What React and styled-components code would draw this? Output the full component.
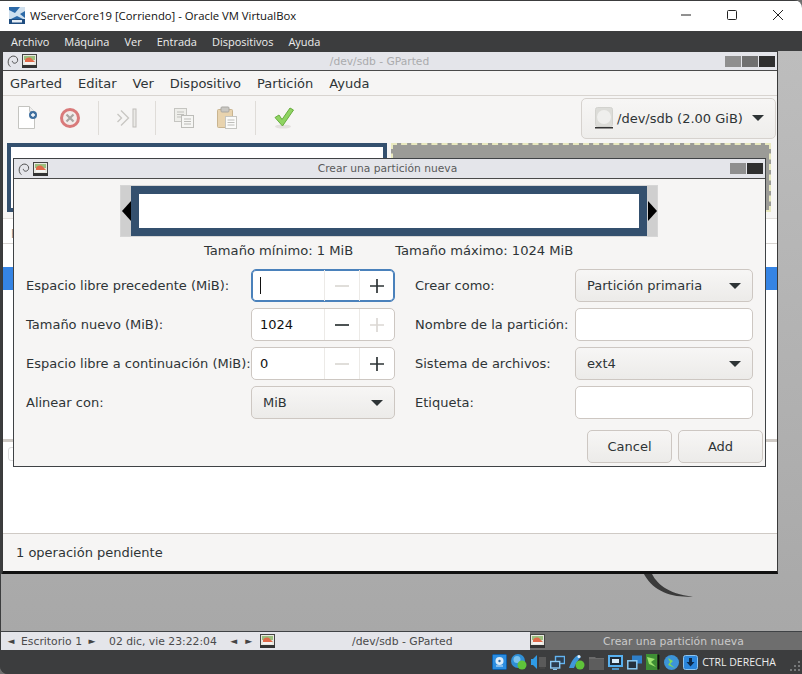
import React from "react"
import styled, { createGlobalStyle } from "styled-components"

const GlobalStyle = createGlobalStyle`
  html, body { margin: 0; padding: 0; background: #6f6f6f; overflow: hidden; }
  * { box-sizing: border-box; }
`

const UI_FONT = `"DejaVu Sans", "Liberation Sans", sans-serif`
const HOST_FONT = `"Open Sans", "Noto Sans", sans-serif`

const Swirl = ({ size = 14 }) => (
  <svg width={size} height={size} viewBox="0 0 16 16" fill="none">
    <path d="M5 14.5C2.6 12.6 2 9.6 2.8 7c.9-3 3.6-4.9 6.3-4.6 2.6.3 4.5 2.5 4.2 4.9-.2 1.9-1.8 3.3-3.6 3.2-1.5-.1-2.6-1.3-2.4-2.6" stroke="#3c3c3c" strokeWidth="1" />
  </svg>
)

const AppThumb = () => (
  <svg width="15" height="14" viewBox="0 0 15 14">
    <rect x="0.5" y="0.5" width="14" height="12" fill="#e8e8e0" stroke="#444" />
    <rect x="2" y="2" width="11" height="4" fill="#9bbf7e" />
    <path d="M3 6c2-3 5-3 7-1l3 3H3z" fill="#e06a4a" />
    <rect x="3" y="8" width="9" height="2" fill="#f4f4f4" />
    <rect x="0" y="11" width="15" height="3" fill="#333" />
  </svg>
)

const NewDocIcon = () => (
  <svg width="22" height="26" viewBox="0 0 22 26">
    <path d="M1.5 1.5h11l5 5v17h-16z" fill="#fff" stroke="#c4c4c0" />
    <path d="M12.5 1.5v5h5" fill="#eee" stroke="#c4c4c0" />
    <circle cx="16" cy="10" r="4" fill="#3f6f9f" />
    <path d="M14 10h4M16 8v4" stroke="#fff" strokeWidth="1.3" />
  </svg>
)

const DeleteIcon = () => (
  <svg width="22" height="22" viewBox="0 0 22 22">
    <circle cx="11" cy="11" r="8.5" fill="#f2ecea" stroke="#d97a7a" strokeWidth="3" />
    <path d="M7.5 7.5l7 7M14.5 7.5l-7 7" stroke="#a9a5a2" strokeWidth="2.2" />
  </svg>
)

const ApplyAllIcon = () => (
  <svg width="22" height="22" viewBox="0 0 22 22" fill="none">
    <path d="M1.5 7l4 4-4 4M5 3.5l7.5 7.5L5 18.5" stroke="#c9c7c3" strokeWidth="1.4" />
    <rect x="17" y="2" width="3" height="18" fill="#ebeae7" stroke="#c0beba" />
  </svg>
)

const CopyIcon = () => (
  <svg width="22" height="22" viewBox="0 0 22 22">
    <rect x="1.5" y="1.5" width="12" height="13" fill="#eeeeea" stroke="#c5c5c1" />
    <path d="M4 5h7M4 7.5h7M4 10h5" stroke="#c0c0bc" />
    <rect x="8.5" y="8.5" width="12" height="12" fill="#f6f6f4" stroke="#bdbdb9" />
    <path d="M11 12h7M11 14.5h7M11 17h7" stroke="#bcbcb8" />
  </svg>
)

const PasteIcon = () => (
  <svg width="22" height="24" viewBox="0 0 22 24">
    <rect x="1.5" y="3.5" width="15" height="18" rx="1" fill="#e8d3ae" stroke="#c9b48f" />
    <rect x="5" y="1" width="8" height="5" rx="1" fill="#c9c7c2" stroke="#a9a7a2" />
    <rect x="9.5" y="10.5" width="11" height="12" fill="#fbfbfa" stroke="#c5c5c1" />
    <path d="M11.5 14h7M11.5 16.5h7M11.5 19h7" stroke="#bdbdb9" />
  </svg>
)

const CheckIcon = () => (
  <svg width="22" height="24" viewBox="0 0 22 24">
    <ellipse cx="10" cy="20.5" rx="8" ry="2" fill="#e3e1de" />
    <path d="M2 11.5l4-2.5 3 4.5L17 2l3.5 2L9.5 20z" fill="#8fd462" stroke="#69ad3f" strokeLinejoin="round" />
  </svg>
)

const DiskIcon = () => (
  <svg width="18" height="22" viewBox="0 0 18 22">
    <rect x="0.5" y="0.5" width="17" height="19" rx="2" fill="#dcdcd8" stroke="#d2d2ce" />
    <circle cx="9" cy="10" r="7" fill="#efefed" />
    <rect x="0" y="20" width="18" height="1.5" fill="#333" />
  </svg>
)

const VBoxIcon = () => (
  <svg width="16" height="17" viewBox="0 0 16 17">
    <rect width="16" height="17" fill="#2c6aa8" />
    <path d="M0 3l6 3 5-6h5v4l-5 3 5 4v2L8 9l-8 4z" fill="#cfe0ee" />
    <rect y="12" width="16" height="5" fill="#1f4d80" />
    <rect x="3" y="13" width="10" height="2.5" fill="#e7eef5" />
  </svg>
)

const PlusGlyph = ({ $off }) => (
  <svg width="14" height="14" viewBox="0 0 14 14">
    <path d="M0 7h14M7 0v14" stroke={$off ? "#dbd8d4" : "#2e3436"} strokeWidth="1.7" />
  </svg>
)

const MinusGlyph = ({ $off }) => (
  <svg width="14" height="14" viewBox="0 0 14 14">
    <path d="M0 7h14" stroke={$off ? "#dbd8d4" : "#2e3436"} strokeWidth="1.7" />
  </svg>
)

const TrayDisk = () => (
  <svg width="15" height="16" viewBox="0 0 15 16"><rect x="0.5" y="0.5" width="14" height="15" rx="1" fill="#2b8de0" stroke="#0f5fa8" /><circle cx="7.5" cy="7" r="4" fill="#dcecf8" /><circle cx="7.5" cy="7" r="1.2" fill="#2b6ca8" /><path d="M4 12h7" stroke="#dcecf8" /></svg>
)
const TrayGlobe = ({ $dot = "#5fc33a" }) => (
  <svg width="16" height="16" viewBox="0 0 16 16"><circle cx="7" cy="7" r="7" fill="#2f8fd6" /><circle cx="6" cy="5.5" r="3.5" fill="#7cc3ee" /><circle cx="11" cy="11" r="4.5" fill={$dot} /></svg>
)
const TrayAudio = () => (
  <svg width="15" height="16" viewBox="0 0 15 16"><path d="M0 5h2l4-4v14l-4-4H0z" fill="#2f9be6" /><rect x="8" y="3" width="7" height="10" fill="#5a5a5a" /><rect x="9" y="13" width="5" height="2" fill="#444" /></svg>
)
const TrayNetwork = () => (
  <svg width="15" height="15" viewBox="0 0 15 15"><rect x="5.5" y="1.5" width="9" height="7" fill="#2c3e50" stroke="#63b4f0" strokeWidth="1.4" /><rect x="0.7" y="6.5" width="9" height="6.5" fill="#2c3e50" stroke="#8ccbf5" strokeWidth="1.4" /><path d="M3 14.5h4" stroke="#8ccbf5" /></svg>
)
const TrayUsb = () => (
  <svg width="16" height="16" viewBox="0 0 16 16"><path d="M0 14C2 8 5 3 9 1l3 2c-3 3-5 6-7 11z" fill="#3f97da" /><circle cx="11" cy="11" r="4.5" fill="#5fc33a" /><circle cx="10" cy="2.5" r="1.5" fill="#e8f2f9" /></svg>
)
const TrayFolder = () => (
  <svg width="15" height="15" viewBox="0 0 15 15"><path d="M0 2h6l1 1h8v12H0z" fill="#6b6b6b" /><rect y="4" width="15" height="11" fill="#5d5d5d" /></svg>
)
const TrayScreen = () => (
  <svg width="15" height="15" viewBox="0 0 15 15"><rect x="1" y="1" width="13" height="10" fill="#1f2a36" stroke="#57b0ef" strokeWidth="2" /><rect x="4" y="4" width="7" height="4" fill="#d8ecf9" /><path d="M4 14h7" stroke="#57b0ef" strokeWidth="1.5" /></svg>
)
const TrayDisplay = () => (
  <svg width="15" height="15" viewBox="0 0 15 15"><rect x="5" y="0.5" width="10" height="8" fill="#2f7fc9" /><rect x="0.8" y="5.8" width="9" height="8" fill="#24313e" stroke="#8ccbf5" strokeWidth="1.5" /></svg>
)
const TrayCpu = () => (
  <svg width="14" height="16" viewBox="0 0 14 16"><rect width="11" height="16" fill="#3e8f34" /><path d="M1 3l8 2-4 3 5 5-7-3z" fill="#9de46e" /><rect x="11" width="3" height="16" fill="#111" stroke="#4f9a3e" strokeWidth="0.6" /></svg>
)
const TrayNet2 = () => (
  <svg width="15" height="15" viewBox="0 0 15 15"><circle cx="7.5" cy="7.5" r="7.5" fill="#3d94d8" /><path d="M4 3l5 3-3 3 5 4-7-3 2-3z" fill="#7ed957" /></svg>
)
const TrayArrow = () => (
  <svg width="15" height="15" viewBox="0 0 15 15"><rect x="0.5" y="0.5" width="14" height="14" rx="2" fill="#2b86dc" stroke="#8cc4ef" /><path d="M6 3h3v4h2.5l-4 4.5-4-4.5H6z" fill="#0d2a4a" /></svg>
)

const Spin = ({ value, focused, minusOff, plusOff }) => (
  <SpinBox $focused={focused}>
    <SpinValue>{focused ? <Caret /> : value}</SpinValue>
    <SpinStep><MinusGlyph $off={minusOff} /></SpinStep>
    <SpinStep><PlusGlyph $off={plusOff} /></SpinStep>
  </SpinBox>
)

const Combo = ({ children }) => (
  <ComboBox>
    <span>{children}</span>
    <ArrowDown />
  </ComboBox>
)

const App = () => (
  <>
    <GlobalStyle />
    <Host>
      <HostTitle>
        <VBoxIcon />
        <HostTitleText>WServerCore19 [Corriendo] - Oracle VM VirtualBox</HostTitleText>
        <HostControls>
          <svg width="12" height="12" viewBox="0 0 12 12"><path d="M1 6h10" stroke="#222" strokeWidth="1" /></svg>
          <svg width="12" height="12" viewBox="0 0 12 12"><rect x="1.5" y="1.5" width="9" height="9" rx="1" fill="none" stroke="#222" /></svg>
          <svg width="12" height="12" viewBox="0 0 12 12"><path d="M1 1l10 10M11 1L1 11" stroke="#222" /></svg>
        </HostControls>
      </HostTitle>
      <HostMenu>
        {["Archivo", "Máquina", "Ver", "Entrada", "Dispositivos", "Ayuda"].map(m => <span key={m}>{m}</span>)}
      </HostMenu>

      <Desktop>
        <DebianTail viewBox="0 0 60 30" width="60" height="30">
          <path d="M0 0L8 0C13 11 24 22 50 24.5C28 26 9 19 0 0z" fill="#3a3a3a" />
        </DebianTail>

        <GPartedWindow>
          <WmBar $height={18}>
            <WmIcons><Swirl /><AppThumb /></WmIcons>
            <WmTitle $dim>/dev/sdb - GParted</WmTitle>
            <WmButtons>
              <WmButton $shade="#8f8f8f" />
              <WmButton $shade="#707070" />
              <WmButton $shade="#2f2f2f" />
            </WmButtons>
          </WmBar>
          <AppMenu>
            {["GParted", "Editar", "Ver", "Dispositivo", "Partición", "Ayuda"].map(m => <span key={m}>{m}</span>)}
          </AppMenu>
          <Toolbar>
            <ToolGroup>
              <ToolSlot><NewDocIcon /></ToolSlot>
              <ToolSlot><DeleteIcon /></ToolSlot>
            </ToolGroup>
            <ToolSep />
            <ToolGroup><ToolSlot><ApplyAllIcon /></ToolSlot></ToolGroup>
            <ToolSep />
            <ToolGroup $gap={1}>
              <ToolSlot><CopyIcon /></ToolSlot>
              <ToolSlot><PasteIcon /></ToolSlot>
            </ToolGroup>
            <ToolSep />
            <ToolGroup><ToolSlot><CheckIcon /></ToolSlot></ToolGroup>
            <DeviceCombo>
              <DiskIcon />
              <span>/dev/sdb (2.00 GiB)</span>
              <ArrowDown />
            </DeviceCombo>
          </Toolbar>
          <DiskMap>
            <NewPartition />
            <FreePartition />
          </DiskMap>
          <ListHeader>P</ListHeader>
          <ListGap />
          <SelectedRow />
          <ListFill />
          <PaneHandle />
          <InfoPane><GhostButton /></InfoPane>
          <AppStatus>1 operación pendiente</AppStatus>
        </GPartedWindow>

        <Dialog>
          <WmBar>
            <WmIcons><Swirl /><AppThumb /></WmIcons>
            <WmTitle>Crear una partición nueva</WmTitle>
            <WmButtons>
              <WmButton $shade="#8f8f8f" />
              <WmButton $shade="#2f2f2f" />
            </WmButtons>
          </WmBar>
          <DialogBody>
            <ResizerRow>
              <Resizer>
                <Handle $dir="left" />
                <ResizerFrame />
                <Handle $dir="right" />
              </Resizer>
            </ResizerRow>
            <Limits>
              <span>Tamaño mínimo: 1 MiB</span>
              <span>Tamaño máximo: 1024 MiB</span>
            </Limits>
            <Form>
              <Label>Espacio libre precedente (MiB):</Label>
              <Spin focused minusOff />
              <RightLabel>Crear como:</RightLabel>
              <Combo>Partición primaria</Combo>

              <Label>Tamaño nuevo (MiB):</Label>
              <Spin value="1024" plusOff />
              <RightLabel>Nombre de la partición:</RightLabel>
              <TextField />

              <Label>Espacio libre a continuación (MiB):</Label>
              <Spin value="0" minusOff />
              <RightLabel>Sistema de archivos:</RightLabel>
              <Combo>ext4</Combo>

              <Label>Alinear con:</Label>
              <Combo>MiB</Combo>
              <RightLabel>Etiqueta:</RightLabel>
              <TextField />
            </Form>
            <Actions>
              <ActionButton>Cancel</ActionButton>
              <ActionButton>Add</ActionButton>
            </Actions>
          </DialogBody>
        </Dialog>
      </Desktop>

      <GuestBar>
        <Pager>
          <TinyArrow>◄</TinyArrow>
          <span>Escritorio 1</span>
          <TinyArrow>►</TinyArrow>
        </Pager>
        <Clock>02 dic, vie 23:22:04</Clock>
        <Pager>
          <TinyArrow>◄</TinyArrow>
          <TinyArrow>►</TinyArrow>
        </Pager>
        <TaskIcon><AppThumb /></TaskIcon>
        <Task>/dev/sdb - GParted</Task>
        <ActiveTask>
          <AppThumb />
          <ActiveLabel>Crear una partición nueva</ActiveLabel>
        </ActiveTask>
      </GuestBar>

      <HostStatus>
        <TrayDisk />
        <TrayGlobe />
        <TrayAudio />
        <TrayNetwork />
        <TrayUsb />
        <TrayFolder />
        <TrayScreen />
        <TrayDisplay />
        <TrayCpu />
        <TrayNet2 />
        <TrayArrow />
        <HostKey>CTRL DERECHA</HostKey>
        <Grip viewBox="0 0 10 10" width="10" height="10">
          <path d="M8 0h2v2H8zM4 4h2v2H4zM8 4h2v2H8zM0 8h2v2H0zM4 8h2v2H4zM8 8h2v2H8z" fill="#77797a" />
        </Grip>
      </HostStatus>
    </Host>
  </>
)

export default App

const Host = styled.div`
  width: 802px;
  height: 674px;
  display: flex;
  flex-direction: column;
  background: #3c3d3e;
  border-radius: 0 8px 0 8px;
  overflow: hidden;
`

const HostTitle = styled.div`
  height: 30px;
  margin-top: 1px;
  flex: none;
  display: flex;
  align-items: center;
  padding: 0 0 2px 9px;
  background: #fff;
`

const HostTitleText = styled.div`
  margin-left: 5px;
  font: 11.3px ${HOST_FONT};
  color: #111;
  flex: 1;
`

const HostControls = styled.div`
  display: flex;
  gap: 34px;
  padding-right: 18px;
`

const HostMenu = styled.div`
  height: 20px;
  flex: none;
  display: flex;
  align-items: center;
  gap: 15px;
  padding-left: 11px;
  background: #3c3d3e;
  font: 11px ${HOST_FONT};
  color: #ededed;
`

const Desktop = styled.div`
  position: relative;
  flex: 1;
  margin-left: 1px;
  background: linear-gradient(180deg, #bdbdbd 0%, #a8a8a8 100%);
  min-height: 0;
`

const DebianTail = styled.svg`
  position: absolute;
  left: 642px;
  top: 521px;
`

const GPartedWindow = styled.div`
  position: absolute;
  left: 1px;
  top: 0;
  width: 776px;
  height: 523px;
  display: flex;
  flex-direction: column;
  background: #fff;
  border-top: 1px solid #3c3d3e;
  border-left: 1px solid #3a3a3a;
  border-right: 1px solid #3a3a3a;
  border-bottom: 3px solid #111;
  box-shadow: -1px 0 0 #3c3d3e;
`

const WmBar = styled.div`
  height: ${p => p.$height || 19}px;
  flex: none;
  display: flex;
  align-items: center;
  padding: 0 2px 0 3px;
  background: #e4e5ea;
  border-bottom: 1px solid #4a4a4a;
  box-sizing: content-box;
`

const WmIcons = styled.div`
  display: flex;
  align-items: center;
  gap: 2px;
`

const WmTitle = styled.div`
  flex: 1;
  text-align: center;
  padding-right: 3px;
  font: 10.7px ${UI_FONT};
  color: ${p => (p.$dim ? "#aaabad" : "#5a5a5a")};
`

const WmButtons = styled.div`
  display: flex;
  gap: 1px;
`

const WmButton = styled.div`
  width: 16px;
  height: 11px;
  background: ${p => p.$shade};
`

const AppMenu = styled.div`
  height: 25px;
  flex: none;
  display: flex;
  align-items: center;
  gap: 16px;
  padding-left: 7px;
  background: #f6f5f4;
  border-bottom: 1px solid #d8d4d0;
  font: 13px ${UI_FONT};
  color: #2e3436;
`

const Toolbar = styled.div`
  height: 44px;
  flex: none;
  display: flex;
  align-items: center;
  background: #f6f5f4;
  position: relative;
  padding-left: 4px;
`

const ToolGroup = styled.div`
  display: flex;
  gap: ${p => p.$gap || 0}px;
`

const ToolSlot = styled.div`
  width: 42px;
  height: 34px;
  display: flex;
  align-items: center;
  justify-content: center;
`

const ToolSep = styled.div`
  width: 1px;
  height: 34px;
  margin: 0 7px;
  background: #dfdcd8;
`

const DeviceCombo = styled.div`
  margin-left: auto;
  margin-right: 1px;
  width: 195px;
  height: 41px;
  display: flex;
  align-items: center;
  padding: 0 11px 0 13px;
  border: 1px solid #d6d2ce;
  border-radius: 5px;
  background: linear-gradient(180deg, #f7f6f5, #eeedeb);
  font: 13px ${UI_FONT};
  color: #2e3436;

  span { margin-left: 4px; flex: 1; white-space: nowrap; }
`

const DiskMap = styled.div`
  height: 78px;
  flex: none;
  display: flex;
  gap: 4px;
  padding: 3px 5px 6px 4px;
  background: #f6f5f4;
`

const NewPartition = styled.div`
  flex: 0 0 380px;
  background: #fff;
  border: 4px solid #34506e;
`

const FreePartition = styled.div`
  flex: 0 0 380px;
  background: #9b9b97;
  border: 2px dashed #e9e9bf;
`

const ListHeader = styled.div`
  height: 26px;
  flex: none;
  padding: 8px 0 0 8px;
  background: #fff;
  border-top: 1px solid #e2dfdb;
  border-bottom: 1px solid #d8d4d0;
  font: 12px ${UI_FONT};
  color: #888;
`

const ListGap = styled.div`
  height: 23px;
  flex: none;
`

const SelectedRow = styled.div`
  height: 23px;
  flex: none;
  background: #3584e4;
`

const ListFill = styled.div`
  flex: 1;
`

const PaneHandle = styled.div`
  height: 3px;
  flex: none;
  background: #cfcac5;
`

const InfoPane = styled.div`
  height: 91px;
  flex: none;
  padding: 5px 0 0 5px;
`

const GhostButton = styled.div`
  width: 30px;
  height: 14px;
  border: 1px solid #ddd;
  border-radius: 3px;
`

const AppStatus = styled.div`
  height: 38px;
  flex: none;
  display: flex;
  align-items: center;
  padding-left: 13px;
  background: #f6f5f4;
  border-top: 1px solid #cfcac5;
  font: 13px ${UI_FONT};
  color: #2e3436;
`

const Dialog = styled.div`
  position: absolute;
  left: 12px;
  top: 107px;
  width: 753px;
  height: 309px;
  display: flex;
  flex-direction: column;
  background: #f6f5f4;
  border: 1px solid #3f4245;
`

const DialogBody = styled.div`
  flex: 1;
  display: flex;
  flex-direction: column;
  padding: 6px 2px 3px 12px;
  min-height: 0;
`

const ResizerRow = styled.div`
  display: flex;
  justify-content: flex-start;
  padding-left: 94px;
`

const Resizer = styled.div`
  width: 538px;
  height: 52px;
  display: flex;
  background: #cfcfcf;
  border: 1px solid #d6d6d6;
  align-items: stretch;
`

const ResizerFrame = styled.div`
  flex: 1;
  background: #fff;
  border: 8px solid #34506e;
`

const Handle = styled.div`
  width: 10px;
  flex: none;
  display: flex;
  align-items: center;
  justify-content: center;

  &::before {
    content: "";
    width: 0;
    height: 0;
    border-top: 10px solid transparent;
    border-bottom: 10px solid transparent;
    ${p => (p.$dir === "left" ? "border-right: 9px solid #000;" : "border-left: 9px solid #000;")}
  }
`

const Limits = styled.div`
  display: flex;
  gap: 42px;
  padding: 0 0 6px 178px;
  height: 32px;
  align-items: center;
  font: 13.1px ${UI_FONT};
  color: #2e3436;
`

const Form = styled.div`
  display: grid;
  grid-template-columns: 225px 144px 180px 178px;
  grid-auto-rows: 33px;
  row-gap: 6px;
  font: 13px ${UI_FONT};
  color: #2e3436;
  white-space: nowrap;
`

const Label = styled.div`
  display: flex;
  align-items: center;
`

const RightLabel = styled(Label)`
  padding-left: 20px;
`

const SpinBox = styled.div`
  display: flex;
  align-items: stretch;
  background: #fff;
  border-radius: 5px;
  border: 1px solid ${p => (p.$focused ? "#4a81bb" : "#cdc7c2")};
  box-shadow: ${p => (p.$focused ? "inset 0 0 0 1px #4a81bb" : "none")};
`

const SpinValue = styled.div`
  flex: 1;
  display: flex;
  align-items: center;
  padding-left: 8px;
  color: #111;
`

const Caret = styled.div`
  width: 1px;
  height: 17px;
  background: #111;
`

const SpinStep = styled.div`
  width: 35px;
  flex: none;
  display: flex;
  align-items: center;
  justify-content: center;
  border-left: 1px solid #eceae7;
`

const ComboBox = styled.div`
  display: flex;
  align-items: center;
  justify-content: space-between;
  padding: 0 11px;
  border: 1px solid #cdc7c2;
  border-radius: 5px;
  background: linear-gradient(180deg, #f7f6f5, #ecebe9);
  color: #2e3436;
`

const ArrowDown = styled.div`
  width: 0;
  height: 0;
  flex: none;
  border-left: 6px solid transparent;
  border-right: 6px solid transparent;
  border-top: 6px solid #2e3436;
`

const TextField = styled.div`
  background: #fff;
  border: 1px solid #cdc7c2;
  border-radius: 5px;
`

const Actions = styled.div`
  display: flex;
  justify-content: flex-end;
  gap: 6px;
  margin-top: auto;
`

const ActionButton = styled.button`
  width: 85px;
  height: 33px;
  border: 1px solid #cdc7c2;
  border-radius: 5px;
  background: linear-gradient(180deg, #f7f6f5, #ecebe9);
  font: 13px ${UI_FONT};
  color: #2e3436;
  padding: 0;
`

const GuestBar = styled.div`
  height: 19px;
  flex: none;
  display: flex;
  align-items: center;
  margin-left: 1px;
  padding-left: 5px;
  background: #e4e5ea;
  border-top: 1px solid #3f4245;
  font: 10.8px ${UI_FONT};
  color: #4a4a4a;
  white-space: nowrap;
`

const Pager = styled.div`
  display: flex;
  align-items: center;
  gap: 5px;
`

const TinyArrow = styled.span`
  font-size: 9px;
  color: #444;
  width: 10px;
  text-align: center;
`

const Clock = styled.div`
  margin: 0 12px 0 12px;
`

const TaskIcon = styled.div`
  margin-left: 6px;
  display: flex;
  align-items: center;
`

const Task = styled.div`
  width: 255px;
  text-align: center;
`

const ActiveTask = styled.div`
  flex: 1;
  align-self: stretch;
  display: flex;
  align-items: center;
  background: #6e6e6e;
`

const ActiveLabel = styled.div`
  flex: 1;
  text-align: center;
  color: #cacaca;
`

const HostStatus = styled.div`
  height: 24px;
  flex: none;
  display: flex;
  align-items: center;
  justify-content: flex-end;
  gap: 4px;
  padding-right: 2px;
  background: #3c3d3e;
`

const HostKey = styled.div`
  margin: 0 10px 0 0;
  font: 10.5px ${HOST_FONT};
  color: #eee;
  white-space: nowrap;
`

const Grip = styled.svg`
  align-self: flex-end;
  margin-bottom: 3px;
`
